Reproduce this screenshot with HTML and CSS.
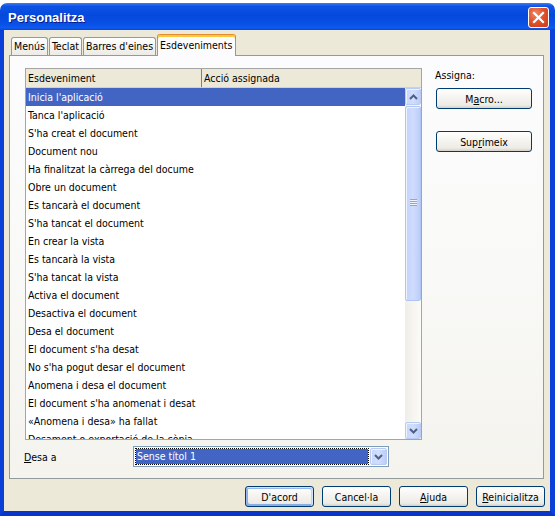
FILE: index.html
```html
<!DOCTYPE html>
<html>
<head>
<meta charset="utf-8">
<link rel="stylesheet" href="styles.css">
</head>
<body>
<div class="window">
  <div class="titlebar">
    <span class="title">Personalitza</span>
    <span class="close"><svg width="21" height="21" viewBox="0 0 21 21"><path d="M6 6 L15 15 M15 6 L6 15" stroke="#fff" stroke-width="2.2" stroke-linecap="square"/></svg></span>
  </div>
  <div class="client">
    <div class="tabs">
      <div class="tab">Menús</div>
      <div class="tab">Teclat</div>
      <div class="tab">Barres d'eines</div>
      <div class="tab active">Esdeveniments</div>
    </div>
    <div class="panel">
      <div class="main-row">
        <div class="listbox">
          <div class="lv-header">
            <div class="col1">Esdeveniment</div>
            <div class="col2">Acció assignada</div>
          </div>
          <div class="lv-body">
            <div class="rows">
              <div class="row selected">Inicia l'aplicació</div>
              <div class="row">Tanca l'aplicació</div>
              <div class="row">S'ha creat el document</div>
              <div class="row">Document nou</div>
              <div class="row">Ha finalitzat la càrrega del docume</div>
              <div class="row">Obre un document</div>
              <div class="row">Es tancarà el document</div>
              <div class="row">S'ha tancat el document</div>
              <div class="row">En crear la vista</div>
              <div class="row">Es tancarà la vista</div>
              <div class="row">S'ha tancat la vista</div>
              <div class="row">Activa el document</div>
              <div class="row">Desactiva el document</div>
              <div class="row">Desa el document</div>
              <div class="row">El document s'ha desat</div>
              <div class="row">No s'ha pogut desar el document</div>
              <div class="row">Anomena i desa el document</div>
              <div class="row">El document s'ha anomenat i desat</div>
              <div class="row">«Anomena i desa» ha fallat</div>
              <div class="row">Desament o exportació de la còpia</div>
            </div>
            <div class="vscroll">
              <div class="sbtn"><svg width="9" height="6" viewBox="0 0 9 6"><path d="M1 5 L4.5 1.5 L8 5" fill="none" stroke="#4D6185" stroke-width="2"/></svg></div>
              <div class="track">
                <div class="thumb"><span class="grip"></span></div>
              </div>
              <div class="sbtn"><svg width="9" height="6" viewBox="0 0 9 6"><path d="M1 1 L4.5 4.5 L8 1" fill="none" stroke="#4D6185" stroke-width="2"/></svg></div>
            </div>
          </div>
        </div>
        <div class="side">
          <div class="side-label">Assigna:</div>
          <button class="btn side-btn">M<u>a</u>cro...</button>
          <button class="btn side-btn second">Sup<u>r</u>imeix</button>
        </div>
      </div>
      <div class="save-row">
        <span class="save-label"><u>D</u>esa a</span>
        <div class="combo">
          <div class="combo-value"><span class="combo-text">Sense títol 1</span></div>
          <div class="combo-btn"><svg width="9" height="6" viewBox="0 0 9 6"><path d="M1 1 L4.5 4.5 L8 1" fill="none" stroke="#4D6185" stroke-width="2"/></svg></div>
        </div>
      </div>
    </div>
    <div class="footer">
      <button class="btn foot-btn default">D'acord</button>
      <button class="btn foot-btn">Cancel·la</button>
      <button class="btn foot-btn"><u>A</u>juda</button>
      <button class="btn foot-btn"><u>R</u>einicialitza</button>
    </div>
  </div>
</div>
</body>
</html>
```

FILE: styles.css
```css
* { box-sizing: border-box; }
html, body { margin: 0; padding: 0; }
body {
  width: 555px;
  height: 516px;
  overflow: hidden;
  background: #fff;
  font-family: "DejaVu Sans Condensed", "Liberation Sans", Arial, sans-serif;
  font-size: 10.5px;
  color: #000;
}
.window {
  margin-top: 3px;
  height: 513px;
  display: flex;
  flex-direction: column;
}
.titlebar {
  height: 27px;
  flex: none;
  border-radius: 7px 7px 0 0;
  background: linear-gradient(180deg, #3d7bf2 0%, #0d54e6 12%, #0548dc 45%, #0a52e8 82%, #0d5bf2 92%, #0a45d4 100%);
  display: flex;
  align-items: center;
  justify-content: space-between;
  padding: 0 6px 0 8px;
}
.title {
  color: #fff;
  font-family: "Liberation Sans", Arial, sans-serif;
  font-weight: bold;
  font-size: 13px;
  text-shadow: 1px 1px #0a1a88;
  margin-top: 1px;
}
.close {
  width: 21px;
  height: 21px;
  border: 1px solid #fff;
  border-radius: 3px;
  background: radial-gradient(circle at 35% 30%, #f08a6a 0%, #e0532c 45%, #c9391a 100%);
  display: flex;
  align-items: center;
  justify-content: center;
  margin-top: 1px;
}
.close svg { margin: -1px; }
.client {
  flex: 1;
  background: #ECE9D8;
  border-left: 4px solid #0a3fd8;
  border-right: 5px solid #0a3fd8;
  border-bottom: 5px solid #0935c8;
  padding: 4px 0 0 5px;
  display: flex;
  flex-direction: column;
}
.tabs {
  height: 21px;
  display: flex;
  align-items: flex-end;
  margin-left: 2px;
  position: relative;
  z-index: 1;
}
.tab {
  height: 18px;
  line-height: 17px;
  padding: 0 2px;
  border: 1px solid #919B9C;
  border-bottom: none;
  border-radius: 3px 3px 0 0;
  background: linear-gradient(180deg, #fff 0%, #f3f2ee 60%, #ecebe5 100%);
  margin-right: 1px;
  white-space: nowrap;
}
.tab.active {
  height: 22px;
  margin-bottom: -1px;
  line-height: 19px;
  padding: 1px 3px 0 2px;
  background: #FCFCFE;
  border-top: 1px solid #e68b2c;
  box-shadow: inset 0 2px #ffc83c;
}
.panel {
  width: 535px;
  height: 424px;
  border: 1px solid #919B9C;
  background: linear-gradient(180deg, #FCFCFE 0%, #f9f9f7 50%, #F4F3EE 100%);
  padding: 12px 0 0 14px;
}
.main-row {
  display: flex;
}
.listbox {
  width: 397px;
  height: 372px;
  margin-left: 1px;
  border: 1px solid #a5a5a5;
  background: #fff;
  display: flex;
  flex-direction: column;
}
.lv-header {
  height: 19px;
  flex: none;
  display: flex;
  background: #ECE9D8;
  border-bottom: 1px solid #d6d2c2;
  line-height: 19px;
}
.col1 {
  width: 176px;
  padding-left: 2px;
  border-right: 1px solid #808080;
}
.col2 {
  padding-left: 2px;
}
.lv-body {
  flex: 1;
  display: flex;
  overflow: hidden;
}
.rows {
  flex: 1;
  overflow: hidden;
}
.row {
  height: 18px;
  line-height: 19px;
  padding-left: 2px;
  white-space: nowrap;
  overflow: hidden;
}
.row.selected {
  background: #4265c4;
  color: #fff;
}
.vscroll {
  width: 16px;
  display: flex;
  flex-direction: column;
  background: linear-gradient(90deg, #f0eee6 0%, #fbfbf8 100%);
}
.sbtn {
  height: 17px;
  flex: none;
  border: 1px solid #b8cbf5;
  border-radius: 2px;
  background: linear-gradient(90deg, #c5d6fc 0%, #d2defd 50%, #bccdf7 100%);
  display: flex;
  align-items: center;
  justify-content: center;
  box-shadow: inset 1px 1px #eef3fe;
}
.track {
  flex: 1;
  padding-top: 1px;
}
.thumb {
  height: 195px;
  border: 1px solid #b1c5f4;
  border-radius: 2px;
  background: linear-gradient(90deg, #c3d3fb 0%, #cfdcfd 50%, #bccdf7 100%);
  box-shadow: inset 1px 1px #eef3fe;
  display: flex;
  justify-content: center;
  padding-top: 92px;
}
.grip {
  width: 7px;
  height: 7px;
  background: repeating-linear-gradient(180deg, #8aa5ec 0 1px, #eef3fe 1px 2px);
}
.side {
  margin-left: 13px;
  display: flex;
  flex-direction: column;
  align-items: flex-start;
}
.side-label {
  margin-top: 1px;
  height: 13px;
  line-height: 13px;
}
.btn {
  font-family: inherit;
  font-size: 10.5px;
  color: #000;
  height: 21px;
  padding: 0;
  border: 1px solid #003C74;
  border-radius: 3px;
  background: linear-gradient(180deg, #ffffff 0%, #f6f5f1 40%, #ecebe6 85%, #d6d0c5 100%);
}
.side-btn {
  width: 96px;
  margin-left: 1px;
  margin-top: 6px;
}
.side-btn.second {
  margin-top: 22px;
}
.save-row {
  margin-top: 6px;
  display: flex;
  align-items: center;
}
.save-label {
  width: 109px;
}
.combo {
  width: 256px;
  height: 21px;
  border: 1px solid #7F9DB9;
  background: #fff;
  padding: 1px;
  display: flex;
}
.combo-value {
  flex: 1;
  background: #fff;
  margin-right: 1px;
  display: flex;
}
.combo-text {
  flex: 1;
  border: 1px dotted #000;
  background: #4265c4;
  background-clip: padding-box;
  color: #fff;
  line-height: 15px;
  padding-left: 1px;
}
.combo-btn {
  width: 17px;
  border: 1px solid #b8cbf5;
  border-radius: 2px;
  background: linear-gradient(90deg, #c5d6fc 0%, #d2defd 50%, #bccdf7 100%);
  box-shadow: inset 1px 1px #eef3fe;
  display: flex;
  align-items: center;
  justify-content: center;
}
.footer {
  margin-top: 7px;
  display: flex;
  justify-content: flex-end;
  gap: 8px;
  padding-right: 5px;
}
.foot-btn {
  width: 69px;
}
.foot-btn.default {
  box-shadow: inset -1px 1px #cee7ff, inset 1px 2px #98b8ea, inset -2px 2px #bcd4f6, inset 1px -1px #89ade4, inset 2px -2px #89ade4;
}
```
